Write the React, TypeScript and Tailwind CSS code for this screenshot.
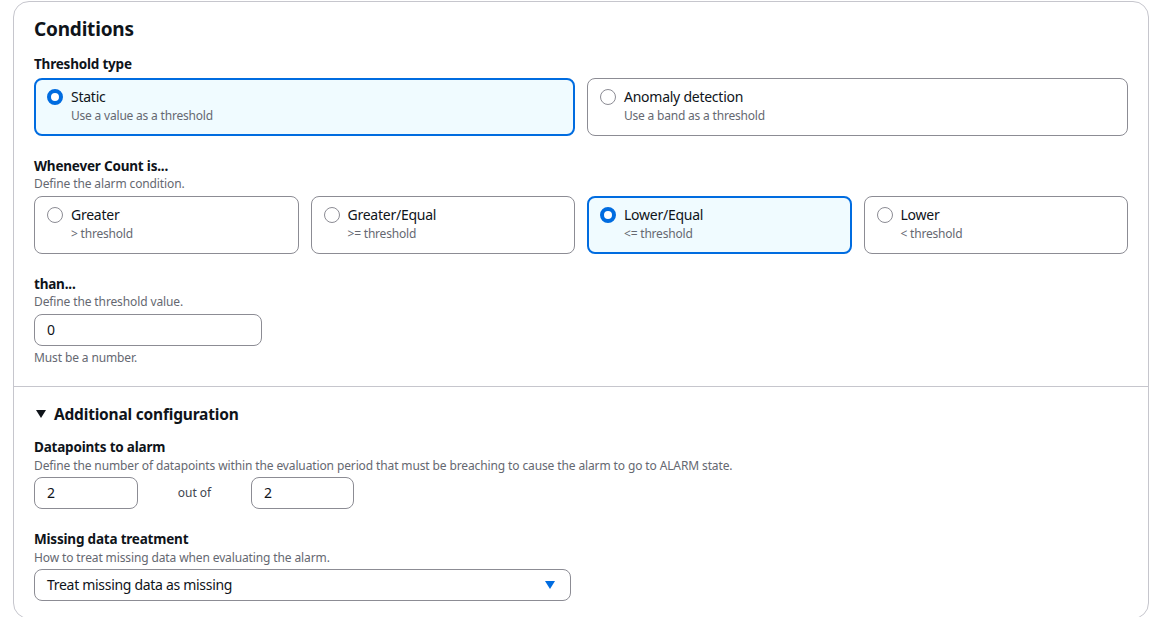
const font = { sans: 'font-["Noto_Sans",sans-serif]' };

const Radio = ({ checked }: { checked?: boolean }) =>
  checked ? (
    <span className="block h-[16px] w-[16px] shrink-0 rounded-full border-[4px] border-[#006ce0] bg-white" />
  ) : (
    <span className="block h-[16px] w-[16px] shrink-0 rounded-full border border-[#8c8c94] bg-white" />
  );

const Tile = ({ title, sub, checked }: { title: string; sub: string; checked?: boolean }) => (
  <div
    className={
      checked
        ? 'flex h-[58px] gap-[8px] rounded-[8px] border-2 border-[#006ce0] bg-[#f0fbff] pl-[11px] pt-[9px]'
        : 'flex h-[58px] gap-[8px] rounded-[8px] border border-[#8c8c94] bg-white pl-[12px] pt-[10px]'
    }
  >
    <Radio checked={checked} />
    <div className="-mt-[1px]">
      <div className="text-[14px] leading-[18px] tracking-[-0.25px] text-[#0f141a]">{title}</div>
      <div className="text-[12px] leading-[20px] tracking-[-0.2px] text-[#656871]">{sub}</div>
    </div>
  </div>
);

const Label = ({ children }: { children: string }) => (
  <div className="text-[13.5px] font-bold leading-[18px] tracking-[-0.2px] text-[#0f141a]">{children}</div>
);

const Hint = ({ children }: { children: string }) => (
  <div className="text-[12px] leading-[18px] tracking-[-0.12px] text-[#656871]">{children}</div>
);

const Input = ({ value, width }: { value: string; width: string }) => (
  <div className={`flex h-[32px] items-center rounded-[8px] border border-[#8c8c94] bg-white pb-[2px] pl-[12px] text-[14px] text-[#0f141a] ${width}`}>
    {value}
  </div>
);

export default function App() {
  return (
    <div className={`h-[617px] overflow-hidden bg-white pl-[13px] pr-[11px] pt-[1px] ${font.sans}`}>
      <div className="h-[618px] rounded-[16px] border border-[#c6c6cd] bg-white">
        <div className="px-[20px]">
          <h2 className="pt-[15px] text-[19px] font-bold leading-[24px] tracking-[-0.2px] text-[#0f141a]">Conditions</h2>

          <div className="mt-[14px]">
            <Label>Threshold type</Label>
          </div>
          <div className="mt-[5px] grid grid-cols-2 gap-[12px]">
            <Tile title="Static" sub="Use a value as a threshold" checked />
            <Tile title="Anomaly detection" sub="Use a band as a threshold" />
          </div>

          <div className="mt-[21px]">
            <Label>Whenever Count is...</Label>
            <Hint>Define the alarm condition.</Hint>
          </div>
          <div className="mt-[3px] grid grid-cols-4 gap-[12px]">
            <Tile title="Greater" sub="> threshold" />
            <Tile title="Greater/Equal" sub=">= threshold" />
            <Tile title="Lower/Equal" sub="<= threshold" checked />
            <Tile title="Lower" sub="< threshold" />
          </div>

          <div className="mt-[21px]">
            <Label>than...</Label>
            <Hint>Define the threshold value.</Hint>
          </div>
          <div className="mt-[3px]">
            <Input value="0" width="w-[228px]" />
          </div>
          <div className="mt-[3px]">
            <Hint>Must be a number.</Hint>
          </div>
        </div>

        <div className="mt-[19px] border-t border-[#c6c6cd] px-[20px]">
          <div className="flex items-center gap-[6px] pt-[17px]">
            <svg width="14" height="12" viewBox="0 0 14 12" className="shrink-0">
              <path d="M2 2h10L7 10z" fill="#0f141a" />
            </svg>
            <span className="text-[15.5px] font-bold leading-[20px] tracking-[-0.2px] text-[#0f141a]">Additional configuration</span>
          </div>

          <div className="mt-[14px]">
            <Label>Datapoints to alarm</Label>
            <div className="mt-[1px]">
              <Hint>Define the number of datapoints within the evaluation period that must be breaching to cause the alarm to go to ALARM state.</Hint>
            </div>
          </div>
          <div className="mt-[2px] flex items-center">
            <Input value="2" width="w-[104px]" />
            <span className="w-[113px] text-center text-[12px] text-[#424650]">out of</span>
            <Input value="2" width="w-[103px]" />
          </div>

          <div className="mt-[21px]">
            <Label>Missing data treatment</Label>
            <div className="mt-[1px]">
              <Hint>How to treat missing data when evaluating the alarm.</Hint>
            </div>
          </div>
          <div className="mt-[2px] flex h-[32px] w-[537px] items-center justify-between rounded-[8px] border border-[#8c8c94] bg-white pl-[12px] pr-[14px] text-[14px] tracking-[-0.3px] text-[#0f141a]">
            <span className="pb-[2px]">Treat missing data as missing</span>
            <svg width="12" height="12" viewBox="0 0 12 12" className="shrink-0">
              <path d="M1 2h10L6 10z" fill="#006ce0" />
            </svg>
          </div>
        </div>
      </div>
    </div>
  );
}
